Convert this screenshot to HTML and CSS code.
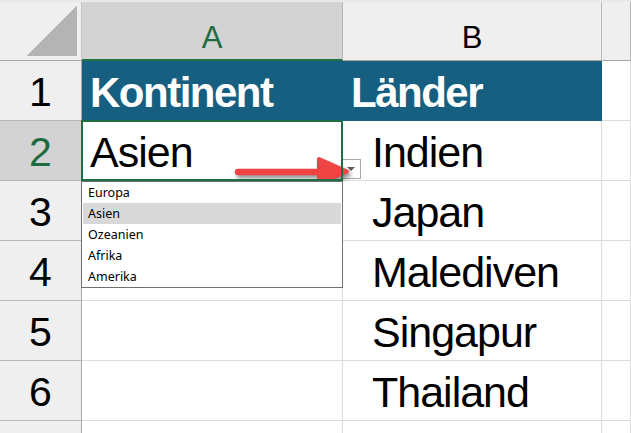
FILE: index.html
```html
<!DOCTYPE html>
<html lang="de">
<head>
  <meta charset="UTF-8">
  <title>Kontinent Auswahl</title>
  <link rel="stylesheet" href="styles.css">
</head>
<body>
  <div class="sheet">
    <div class="corner"></div>
    <div class="colhead active">A</div>
    <div class="colhead">B</div>
    <div class="colhead"></div>

    <div class="rowhead">1</div>
    <div class="cell title">Kontinent</div>
    <div class="cell title">Länder</div>
    <div class="cell"></div>

    <div class="rowhead active">2</div>
    <div class="cell selected">
      Asien
      <div class="drop-btn"><span class="tri"></span></div>
      <svg class="arrow" width="125" height="40" viewBox="0 0 125 40">
        <line x1="8" y1="20" x2="100" y2="20" stroke="#ef4444" stroke-width="6.5" stroke-linecap="round"/>
        <polygon points="89,7 117,19.5 89,32" fill="#ef4444" stroke="#ef4444" stroke-width="4" stroke-linejoin="round"/>
      </svg>
      <ul class="list">
        <li>Europa</li>
        <li class="hover">Asien</li>
        <li>Ozeanien</li>
        <li>Afrika</li>
        <li>Amerika</li>
      </ul>
    </div>
    <div class="cell land">Indien</div>
    <div class="cell"></div>

    <div class="rowhead">3</div>
    <div class="cell"></div>
    <div class="cell land">Japan</div>
    <div class="cell"></div>

    <div class="rowhead">4</div>
    <div class="cell"></div>
    <div class="cell land">Malediven</div>
    <div class="cell"></div>

    <div class="rowhead">5</div>
    <div class="cell"></div>
    <div class="cell land">Singapur</div>
    <div class="cell"></div>

    <div class="rowhead">6</div>
    <div class="cell"></div>
    <div class="cell land">Thailand</div>
    <div class="cell"></div>

    <div class="rowhead"></div>
    <div class="cell"></div>
    <div class="cell"></div>
    <div class="cell"></div>
  </div>
</body>
</html>
```

FILE: styles.css
```css
* {
  margin: 0;
  padding: 0;
  box-sizing: border-box;
}

body {
  font-family: "Liberation Sans", Arial, sans-serif;
  background-color: #ffffff;
  color: #000000;
  overflow: hidden;
}

.sheet {
  display: grid;
  grid-template-columns: 82px 261px 259px 1fr;
  grid-template-rows: 59px;
  grid-auto-rows: 60px;
  border-top: 2px solid #e6e9ec;
  height: 433px;
  overflow: hidden;
}

.corner {
  background: linear-gradient(to bottom right, transparent 50%, #b4b4b4 50%) no-repeat right 4px bottom 4px / 51px 50px, #efefef;
  border-right: 1px solid #c4c4c4;
  border-bottom: 1px solid #a6a6a6;
}

.colhead {
  background-color: #efefef;
  border-right: 1px solid #b8b8b8;
  border-bottom: 1px solid #a6a6a6;
  display: flex;
  align-items: flex-end;
  justify-content: center;
  font-size: 31px;
  line-height: 1;
  padding-bottom: 7px;
}

.colhead.active {
  background-color: #d3d3d3;
  color: #1f6b41;
  border-bottom: 2px solid #217346;
  padding-bottom: 6px;
}

.rowhead {
  background-color: #efefef;
  border-right: 1px solid #a6a6a6;
  border-bottom: 1px solid #b8b8b8;
  display: flex;
  align-items: flex-end;
  justify-content: center;
  font-size: 41px;
  line-height: 1;
  padding-bottom: 7px;
}

.rowhead.active {
  background-color: #d3d3d3;
  color: #1f6b41;
}

.cell {
  border-right: 1px solid #dcdcdc;
  border-bottom: 1px solid #dcdcdc;
  display: flex;
  align-items: flex-end;
  padding: 0 8px 6px;
  font-size: 43px;
  line-height: 1;
  letter-spacing: -1px;
  white-space: nowrap;
}

.cell.title {
  background-color: #165f81;
  border-color: #165f81;
  color: #ffffff;
  font-weight: bold;
  font-size: 42px;
  letter-spacing: -1.5px;
}

.cell.land {
  padding-left: 29px;
}

.cell.selected {
  position: relative;
  z-index: 2;
}

.cell.selected::after {
  content: "";
  position: absolute;
  top: -1px;
  left: -1px;
  right: -1px;
  bottom: -1px;
  border: 2px solid #1f6e43;
  pointer-events: none;
}

.drop-btn {
  position: absolute;
  left: 259px;
  top: 38px;
  width: 20px;
  height: 20px;
  background-color: #ffffff;
  border: 1px solid #a9a9a9;
  display: flex;
  align-items: center;
  justify-content: center;
}

.tri {
  width: 0;
  height: 0;
  border-left: 4px solid transparent;
  border-right: 4px solid transparent;
  border-top: 4px solid #5c5c5c;
}

.arrow {
  position: absolute;
  left: 148px;
  top: 31px;
  filter: drop-shadow(2px 3px 2px rgba(0, 0, 0, 0.45));
}

.list {
  position: absolute;
  top: calc(100% + 1px);
  left: -1px;
  width: 262px;
  list-style: none;
  background-color: #ffffff;
  border: 1px solid #707070;
  padding: 0 1px;
  font-family: "Noto Sans", "Open Sans", sans-serif;
  font-size: 12.5px;
  letter-spacing: 0;
  line-height: 21px;
}

.list li {
  height: 21px;
  padding-left: 5px;
}

.list li.hover {
  background-color: #d9d9d9;
}
```
